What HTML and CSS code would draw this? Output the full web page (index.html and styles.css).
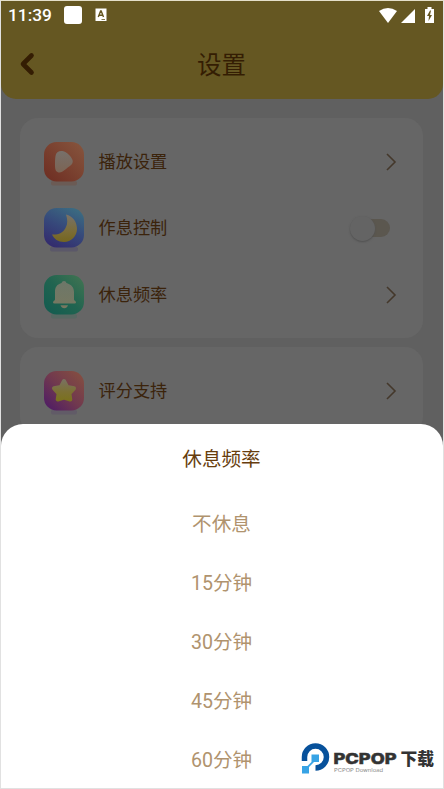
FILE: index.html
```html
<!DOCTYPE html>
<html lang="zh-CN">
<head>
<meta charset="utf-8">
<title>设置</title>
<link rel="stylesheet" href="styles.css">
</head>
<body>
<div class="screen">
  <header class="header">
    <div class="status">
      <span class="time">11:39</span>
      <span class="status-app"></span>
      <svg class="status-a" width="12" height="14" viewBox="0 0 12 14"><path d="M.5.500h11v12.500H.5z" fill="#fff"/><path d="M3.300 9 5.600 3h.6L8.500 9M4.200 7.300h3.400" fill="none" stroke="#655722" stroke-width="1.400"/><path d="M6.500 11.500H10" stroke="#655722" stroke-width=".8"/></svg>
      <svg class="status-right" width="58" height="18" viewBox="0 0 58 18"><path d="M1 5Q10-1 19 5L10 17Z" fill="#fff"/><path d="M23 17 37 3v14Z" fill="#fff"/><path d="M47 3h2.500V1h4v2H56v14h-9z" fill="#fff"/><path d="M52 4.500 49 10h2l-.5 5 3.500-6h-2l1-4.500z" fill="#655722"/></svg>
    </div>
    <div class="titlebar">
      <svg class="back" width="16" height="24" viewBox="0 0 16 24"><path d="M12.500 3.500 4 12l8.500 8.500" fill="none" stroke="#341d03" stroke-width="4.600" stroke-linecap="round" stroke-linejoin="round"/></svg>
      <h1 class="title">设置</h1>
    </div>
  </header>
  <main class="list">
    <section class="card">
      <div class="row">
        <svg class="icon" width="40" height="46" viewBox="0 0 40 46">
          <defs><linearGradient id="play" x1="1" y1="0" x2="0" y2="1"><stop stop-color="#87563e"/><stop offset="1" stop-color="#6d2c21"/></linearGradient><linearGradient id="cream" x1="0" y1="0" x2="0" y2="1"><stop stop-color="#77706a"/><stop offset="1" stop-color="#7c6454"/></linearGradient></defs>
          <rect class="shade" x="7" y="39" width="26" height="4.500" rx="2" fill="#705044"/>
          <rect width="40" height="39.500" rx="12.500" fill="url(#play)"/>
          <path d="M11.500 14C12 10 15 8.500 18.500 9 23 10 27 14 28.500 18c1 3-1 5-4 7-3 2-5 5-9 5.500-3 0-4.500-2-4.500-7 0-3 0-6 .5-9.500z" fill="url(#cream)"/>
        </svg>
        <span class="label">播放设置</span>
        <svg class="chevron" width="12" height="20" viewBox="0 0 12 20"><path d="m2 2 8 8-8 8"/></svg>
      </div>
      <div class="row">
        <svg class="icon" width="40" height="46" viewBox="0 0 40 46">
          <defs><linearGradient id="night" x1=".7" y1="0" x2=".2" y2="1"><stop stop-color="#3b6a81"/><stop offset=".5" stop-color="#36477a"/><stop offset="1" stop-color="#332a6d"/></linearGradient><linearGradient id="moon" x1="0" y1="0" x2="0" y2="1"><stop stop-color="#77716a"/><stop offset=".65" stop-color="#7b6c34"/><stop offset="1" stop-color="#74651f"/></linearGradient></defs>
          <rect class="shade" x="6" y="39" width="28" height="4.500" rx="2" fill="#504a6c"/>
          <rect width="40" height="39.500" rx="12.500" fill="url(#night)"/>
          <path d="M22 6.500C29 8 33 14 33 21c0 7-6 13-13 13-6 0-10-3-12-7.500 6 .5 11-1.500 13.500-6.500C24 15.500 23.500 11 22 6.500z" fill="url(#moon)"/>
        </svg>
        <span class="label">作息控制</span>
        <span class="toggle"><span class="knob"></span></span>
      </div>
      <div class="row">
        <svg class="icon" width="40" height="46" viewBox="0 0 40 46">
          <defs><linearGradient id="green" x1="1" y1="0" x2="0" y2="1"><stop stop-color="#437552"/><stop offset=".5" stop-color="#216450"/><stop offset="1" stop-color="#125b50"/></linearGradient><linearGradient id="bell" x1="0" y1="0" x2="0" y2="1"><stop stop-color="#6d7769"/><stop offset="1" stop-color="#777860"/></linearGradient></defs>
          <rect class="shade" x="7" y="39" width="26" height="4.500" rx="2" fill="#48695e"/>
          <rect width="40" height="39.500" rx="12.500" fill="url(#green)"/>
          <path d="M20 6q2 0 2.500 2c5 1.500 7.500 4.500 7.500 9v7.500c0 1 2 1.500 2 2.700q0 1.300-1.500 1.300h-20Q9 28.500 9 27.200c0-1.200 2-1.700 2-2.700V17c0-4.500 1.500-7.500 6.500-9q.5-2 2.500-2zM16.500 30.300h7.500q-1 3-3.700 3t-3.800-3z" fill="url(#bell)"/>
        </svg>
        <span class="label">休息频率</span>
        <svg class="chevron" width="12" height="20" viewBox="0 0 12 20"><path d="m2 2 8 8-8 8"/></svg>
      </div>
    </section>
    <section class="card">
      <div class="row">
        <svg class="icon" width="40" height="46" viewBox="0 0 40 46">
          <defs><linearGradient id="pink" x1="1" y1="0" x2="0" y2="1"><stop stop-color="#87513f"/><stop offset=".5" stop-color="#71394e"/><stop offset="1" stop-color="#4b1968"/></linearGradient><linearGradient id="star" x1="0" y1="0" x2="0" y2="1"><stop stop-color="#79715c"/><stop offset=".6" stop-color="#7c7032"/><stop offset="1" stop-color="#7b7120"/></linearGradient></defs>
          <rect class="shade" x="7" y="39" width="26" height="4.500" rx="2" fill="#5c4f68"/>
          <rect width="40" height="39.500" rx="12.500" fill="url(#pink)"/>
          <path d="m20 10 3.200 6 6.800 1.300-4.600 5.200.9 6-6.300-2-6.300 2 .9-6-4.600-5.200L16.800 16z" fill="url(#star)" stroke="url(#star)" stroke-width="4" stroke-linejoin="round"/>
        </svg>
        <span class="label">评分支持</span>
        <svg class="chevron" width="12" height="20" viewBox="0 0 12 20"><path d="m2 2 8 8-8 8"/></svg>
      </div>
    </section>
  </main>
  <section class="sheet">
    <h2 class="sheet-title">休息频率</h2>
    <div class="option">不休息</div>
    <div class="option">15分钟</div>
    <div class="option">30分钟</div>
    <div class="option">45分钟</div>
    <div class="option">60分钟</div>
  </section>
  <svg class="brand" width="136" height="36" viewBox="0 0 136 36">
    <path d="M3.500 19V15a11 11 0 1 1 11 11" fill="none" stroke="#07519b" stroke-width="5.500"/>
    <path d="M10.500 12.500H18V20h-5l-5 5v6.500H1V24h5.500l4-4z" fill="#37a3e5"/>
    <text class="brand-name" x="32.500" y="22.300" textLength="63" lengthAdjust="spacingAndGlyphs">PCPOP</text>
    <text class="brand-cn" x="99.500" y="22.500" textLength="33.500" lengthAdjust="spacingAndGlyphs">下载</text>
    <text class="brand-sub" x="33" y="29.500" textLength="49" lengthAdjust="spacingAndGlyphs">PCPOP Download</text>
  </svg>
</div>
</body>
</html>
```
FILE: styles.css
```css
* { box-sizing: border-box; }
body {
  margin: 0;
  font-family: Roboto, "Noto Sans CJK SC", sans-serif;
}
.screen {
  position: relative;
  width: 444px;
  height: 789px;
  overflow: hidden;
  border: 1px solid #e1e1e1;
  border-top-color: #e4dfca;
  background: #606060;
}
.header {
  height: 98px;
  background: #655722;
  border-radius: 0 0 15px 15px;
}
.status {
  display: flex;
  align-items: center;
  height: 28px;
  padding: 0 7px 0 7px;
}
.time {
  width: 56px;
  color: #fff;
  font-size: 17.3px;
  font-weight: 500;
  line-height: 28px;
}
.status-app {
  width: 18px;
  height: 18px;
  border-radius: 3px;
  background: #fff;
}
.status-a { margin-left: 12.5px; }
.status-right { margin-left: auto; }
.titlebar {
  display: grid;
  grid-template-columns: 40px 1fr 40px;
  align-items: center;
  height: 70px;
}
.back { margin-left: 18px; }
.title {
  margin: 0;
  padding: 3px 1px 0 0;
  color: #341d03;
  font-size: 24.5px;
  font-weight: 400;
  line-height: 36px;
  text-align: center;
}
.list {
  display: flex;
  flex-direction: column;
  gap: 9px;
  padding: 19px 20px 0 19px;
}
.card {
  padding: 10.6px 24px 9.8px;
  border-radius: 18px;
  background: #666;
}
.row {
  display: flex;
  align-items: center;
  height: 66.5px;
}
.icon {
  flex: none;
  margin-top: 6px;
}
.shade { opacity: .5; }
.label {
  margin-left: 14.5px;
  color: #3b230b;
  font-size: 17.2px;
  line-height: 24px;
}
.chevron {
  margin-left: auto;
  margin-right: 2px;
  fill: none;
  stroke: #44382b;
  stroke-width: 1.6;
}
.toggle {
  display: flex;
  align-items: center;
  width: 36px;
  height: 18px;
  margin-left: auto;
  margin-right: 9px;
  border-radius: 9px;
  background: #5b574f;
}
.knob {
  width: 25px;
  height: 25px;
  margin-left: -4px;
  border-radius: 50%;
  background: #646464;
  box-shadow: 0 1px 2px #505050;
}
.sheet {
  position: absolute;
  top: 423px;
  left: 0;
  width: 442px;
  height: 364px;
  padding-top: 1px;
  padding-right: 1px;
  border-radius: 22px 22px 0 0;
  background: #fff;
  text-align: center;
}
.sheet-title {
  margin: 0;
  color: #673d0d;
  font-size: 19.6px;
  font-weight: 400;
  line-height: 69.6px;
}
.option {
  height: 59.1px;
  color: #b0936e;
  font-size: 19.6px;
  line-height: 59.1px;
}
.brand {
  position: absolute;
  left: 300px;
  top: 741px;
}
.brand-name {
  fill: #333;
  stroke: #333;
  stroke-width: .5px;
  font: 800 14.5px Inter, sans-serif;
}
.brand-cn {
  fill: #333;
  font: 900 16.5px "Noto Sans CJK SC", sans-serif;
}
.brand-sub {
  fill: #888;
  font: 4.5px Inter, sans-serif;
}
```
